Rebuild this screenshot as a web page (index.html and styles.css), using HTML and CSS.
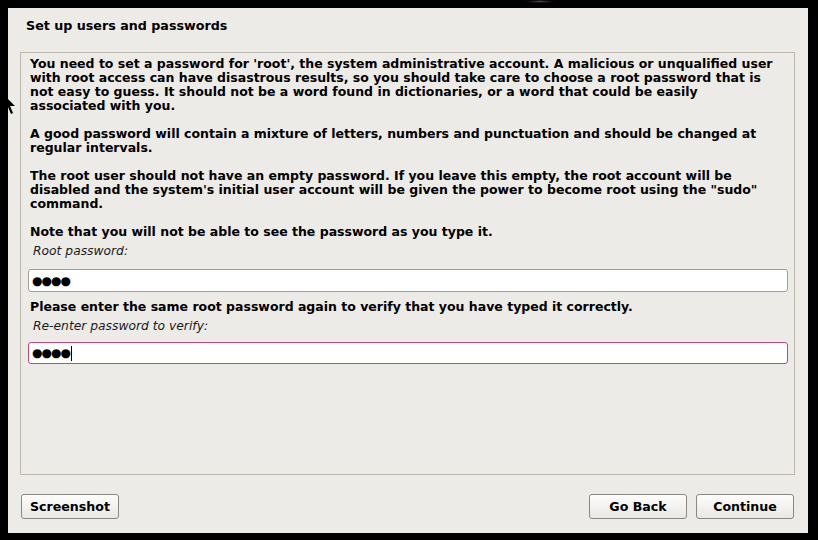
FILE: index.html
```html
<!DOCTYPE html>
<html>
<head>
<meta charset="utf-8">
<link rel="stylesheet" href="styles.css">
</head>
<body>
<div class="window">
  <h1 class="title">Set up users and passwords</h1>
  <div class="frame">
    <p class="para">You need to set a password for 'root', the system administrative account. A malicious or unqualified user with root access can have disastrous results, so you should take care to choose a root password that is not easy to guess. It should not be a word found in dictionaries, or a word that could be easily associated with you.</p>
    <p class="para">A good password will contain a mixture of letters, numbers and punctuation and should be changed at regular intervals.</p>
    <p class="para">The root user should not have an empty password. If you leave this empty, the root account will be disabled and the system's initial user account will be given the power to become root using the "sudo" command.</p>
    <p class="para note">Note that you will not be able to see the password as you type it.</p>
    <div class="label">Root password:</div>
    <div class="input"><span class="dots">●●●●</span></div>
    <p class="para again">Please enter the same root password again to verify that you have typed it correctly.</p>
    <div class="label second">Re-enter password to verify:</div>
    <div class="input focused"><span class="dots">●●●●</span><span class="caret"></span></div>
  </div>
  <div class="buttons">
    <button class="btn">Screenshot</button>
    <div class="spacer"></div>
    <button class="btn">Go Back</button>
    <button class="btn">Continue</button>
  </div>
</div>
<div class="glow"></div>
<svg class="pointer" width="14" height="22" viewBox="0 0 14 22"><path d="M0 0 L0 16 L4 12 L7 19 L9 18 L6 11 L11 11 Z" fill="#000"/></svg>
</body>
</html>
```
FILE: styles.css
```css
html, body {
  margin: 0;
  padding: 0;
  background: #000;
}
body {
  width: 818px;
  height: 540px;
  position: relative;
  overflow: hidden;
  font-family: "DejaVu Sans", sans-serif;
  color: #000;
}
.window {
  position: absolute;
  left: 8px;
  top: 8px;
  width: 800px;
  height: 525px;
  background: #edebe7;
  display: flex;
  flex-direction: column;
  box-sizing: border-box;
}
.title {
  margin: 0;
  padding: 10px 0 0 18px;
  height: 44px;
  box-sizing: border-box;
  font-size: 12.7px;
  font-weight: bold;
  line-height: 16px;
}
.frame {
  margin-left: 12px;
  width: 775px;
  height: 423px;
  box-sizing: border-box;
  border: 1px solid #bdb6ab;
  padding: 4px 0 0 9px;
}
.para {
  margin: 0 0 14px 0;
  font-size: 12.5px;
  font-weight: bold;
  line-height: 14px;
  width: 745px;
}
.para.note {
  margin-bottom: 4px;
}
.para.again {
  margin-top: 8px;
  margin-bottom: 4px;
}
.label {
  font-size: 12.3px;
  font-style: italic;
  line-height: 16px;
  padding-left: 3px;
  color: #1a1a1a;
  margin-bottom: 10px;
}
.label.second {
  margin-bottom: 8px;
}
.input {
  margin-left: -2px;
  width: 760px;
  height: 23px;
  box-sizing: border-box;
  background: #fff;
  border: 1px solid #a49d93;
  border-radius: 3px;
  display: flex;
  align-items: center;
  padding-left: 3px;
}
.input.focused {
  border-color: #c2477a;
  height: 22px;
}
.dots {
  font-size: 12px;
  letter-spacing: -1px;
  line-height: 14px;
}
.caret {
  width: 1px;
  height: 15px;
  background: #000;
  margin-left: 1px;
}
.buttons {
  display: flex;
  align-items: center;
  padding: 19px 14px 0 13px;
  gap: 9px;
}
.spacer {
  flex: 1;
}
.btn {
  width: 98px;
  height: 25px;
  box-sizing: border-box;
  border: 1px solid #8c867e;
  border-radius: 3px;
  background: linear-gradient(#fdfdfc, #e9e7e3);
  font-family: "DejaVu Sans", sans-serif;
  font-size: 12.6px;
  font-weight: bold;
  color: #000;
  padding: 0;
}
.glow {
  position: absolute;
  left: 525px;
  top: 0;
  width: 30px;
  height: 3px;
  border-radius: 50%;
  background: radial-gradient(#4a4a4a, #000 70%);
}
.pointer {
  position: absolute;
  left: 4px;
  top: 95px;
}
```
